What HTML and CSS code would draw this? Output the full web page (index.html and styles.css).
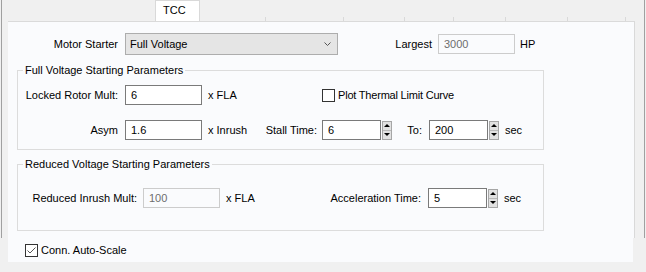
FILE: index.html
```html
<!DOCTYPE html>
<html lang="en">
<head>
    <meta charset="UTF-8">
    <meta name="viewport" content="width=device-width, initial-scale=1.0">
    <title>TCC</title>
    <link rel="stylesheet" href="styles.css">
</head>
<body>

    <div class="frame">
        <div class="tabs">
            <span class="tab">TCC</span>
            <span class="ghost"></span>
            <span class="ghost"></span>
            <span class="ghost"></span>
            <span class="ghost"></span>
            <span class="ghost"></span>
            <span class="ghost"></span>
            <span class="ghost"></span>
        </div>

        <div class="panel-body">
            <div class="row top-row">
                <span class="lbl lbl-motor">Motor Starter</span>
                <div class="combo">
                    <span>Full Voltage</span>
                    <svg width="7" height="4" viewBox="0 0 7 4"><polyline points="0.5,0.5 3.5,3.5 6.5,0.5" fill="none" stroke="#555" stroke-width="1"/></svg>
                </div>
                <span class="lbl lbl-largest">Largest</span>
                <input type="text" class="field field-largest" value="3000" disabled>
                <span class="unit unit-hp">HP</span>
            </div>

            <fieldset class="group">
                <legend>Full Voltage Starting Parameters</legend>
                <div class="row">
                    <span class="lbl lbl-locked">Locked Rotor Mult:</span>
                    <input type="text" class="field field-wide" value="6">
                    <span class="unit unit-fla">x FLA</span>
                    <span class="check"></span>
                    <span class="check-text">Plot Thermal Limit Curve</span>
                </div>
                <div class="row">
                    <span class="lbl lbl-locked">Asym</span>
                    <input type="text" class="field field-wide" value="1.6">
                    <span class="unit unit-inrush">x Inrush</span>
                    <span class="lbl lbl-stall">Stall Time:</span>
                    <input type="text" class="field field-short" value="6">
                    <span class="spin"><span class="up"></span><span class="down"></span></span>
                    <span class="lbl lbl-to">To:</span>
                    <input type="text" class="field field-short" value="200">
                    <span class="spin"><span class="up"></span><span class="down"></span></span>
                    <span class="unit unit-sec">sec</span>
                </div>
            </fieldset>

            <fieldset class="group group-reduced">
                <legend>Reduced Voltage Starting Parameters</legend>
                <div class="row">
                    <span class="lbl lbl-reduced">Reduced Inrush Mult:</span>
                    <input type="text" class="field field-reduced" value="100" disabled>
                    <span class="unit unit-fla2">x FLA</span>
                    <span class="lbl lbl-accel">Acceleration Time:</span>
                    <input type="text" class="field field-short" value="5">
                    <span class="spin"><span class="up"></span><span class="down"></span></span>
                    <span class="unit unit-sec">sec</span>
                </div>
            </fieldset>
        </div>
    </div>

    <div class="footer">
        <span class="check">
            <svg width="11" height="11" viewBox="0 0 11 11"><polyline points="1.5,5.5 4,8 9.5,2.5" fill="none" stroke="#555" stroke-width="1"/></svg>
        </span>
        <span>Conn. Auto-Scale</span>
    </div>

</body>
</html>
```

FILE: styles.css
```css
body {
    margin: 0;
    background-color: #f0f0f0;
    font-family: "Liberation Sans", Arial, sans-serif;
    font-size: 11px;
    color: #000;
}
.frame {
    margin-left: 1px;
    width: 642px;
    border-left: 1px solid #a0a0a0;
    border-right: 1px solid #a0a0a0;
}
.tabs {
    display: grid;
    grid-template-columns: 153px 45px 66px 78px 61px 49px 52px 62px 58px;
    height: 21px;
}
.tab {
    grid-column: 2;
    border: 1px solid #d9d9d9;
    border-bottom: none;
    background-color: #fff;
    padding: 2px 0 0 7px;
    line-height: 14px;
}
.ghost {
    align-self: end;
    height: 4px;
    border-right: 1px solid #d9d9d9;
}
.panel-body {
    margin-left: 6px;
    width: 617px;
    padding: 11px 0 7px 9px;
    background-color: #fafbfd;
    border-top: 1px solid #dadada;
    border-right: 1px solid #d9d9d9;
}
.row {
    display: flex;
    align-items: center;
    height: 20px;
}
.top-row {
    height: 22px;
}
.lbl {
    flex: none;
    text-align: right;
}
.unit {
    flex: none;
}
.field {
    flex: none;
    box-sizing: border-box;
    height: 20px;
    margin: 0;
    padding: 0 0 0 5px;
    border: 1px solid #7a7a7a;
    background-color: #fff;
    font: inherit;
    color: #000;
    outline: none;
}
.field:disabled {
    border-color: #cccccc;
    background-color: #fafbfd;
    color: #6d6d6d;
}

/* top row */
.lbl-motor {
    width: 101px;
}
.combo {
    display: flex;
    align-items: center;
    justify-content: space-between;
    box-sizing: border-box;
    width: 213px;
    height: 22px;
    margin-left: 7px;
    padding: 0 6px 0 4px;
    border: 1px solid #adadad;
    background-color: #e5e5e5;
}
.lbl-largest {
    width: 94px;
}
.field-largest {
    width: 77px;
    margin-left: 6px;
}
.unit-hp {
    margin-left: 5px;
}

/* group boxes */
.group {
    box-sizing: border-box;
    width: 527px;
    min-width: 0;
    margin: 8px 0 0;
    padding: 8px 0 9px;
    border: 1px solid #dcdcdc;
}
.group legend {
    margin-left: 5px;
    padding: 0 2px;
    line-height: 14px;
}
.group .row + .row {
    margin-top: 15px;
}
.group-reduced {
    margin-top: 7px;
    padding: 17px 0 22px;
}
.lbl-locked {
    width: 100px;
}
.field-wide {
    width: 77px;
    margin-left: 7px;
}
.unit-fla {
    width: 114px;
    margin-left: 6px;
}
.unit-inrush {
    width: 52px;
    margin-left: 6px;
}
.lbl-stall {
    width: 57px;
}
.field-short {
    width: 59px;
    margin-left: 5px;
}
.lbl-to {
    width: 30px;
}
.lbl-to + .field-short {
    margin-left: 7px;
}
.unit-sec {
    margin-left: 6px;
}
.lbl-reduced {
    width: 119px;
}
.field-reduced {
    width: 77px;
    margin-left: 6px;
}
.unit-fla2 {
    width: 74px;
    margin-left: 6px;
}
.lbl-accel {
    width: 121px;
}
.lbl-accel + .field-short {
    margin-left: 7px;
}

/* spinner */
.spin {
    flex: none;
    display: flex;
    flex-direction: column;
    box-sizing: border-box;
    width: 10px;
    height: 19px;
    margin-left: 1px;
    border: 1px solid #a6a6a6;
    background-color: #e1e1e1;
}
.spin span {
    flex: 1;
    display: flex;
    align-items: center;
    justify-content: center;
}
.spin .down {
    border-top: 1px solid #b8b8b8;
}
.spin .up::before,
.spin .down::before {
    content: "";
    border-left: 3px solid transparent;
    border-right: 3px solid transparent;
}
.spin .up::before {
    border-bottom: 3px solid #000;
}
.spin .down::before {
    border-top: 3px solid #000;
}

/* checkboxes */
.check {
    flex: none;
    display: inline-flex;
    align-items: center;
    justify-content: center;
    box-sizing: border-box;
    width: 13px;
    height: 13px;
    border: 1px solid #333;
    background-color: #fff;
}
.check-text {
    margin-left: 3px;
    letter-spacing: -0.2px;
}
.footer {
    display: flex;
    align-items: center;
    gap: 3px;
    width: 608px;
    height: 24px;
    margin-left: 8px;
    padding-left: 17px;
    background-color: #fafbfd;
}
```
